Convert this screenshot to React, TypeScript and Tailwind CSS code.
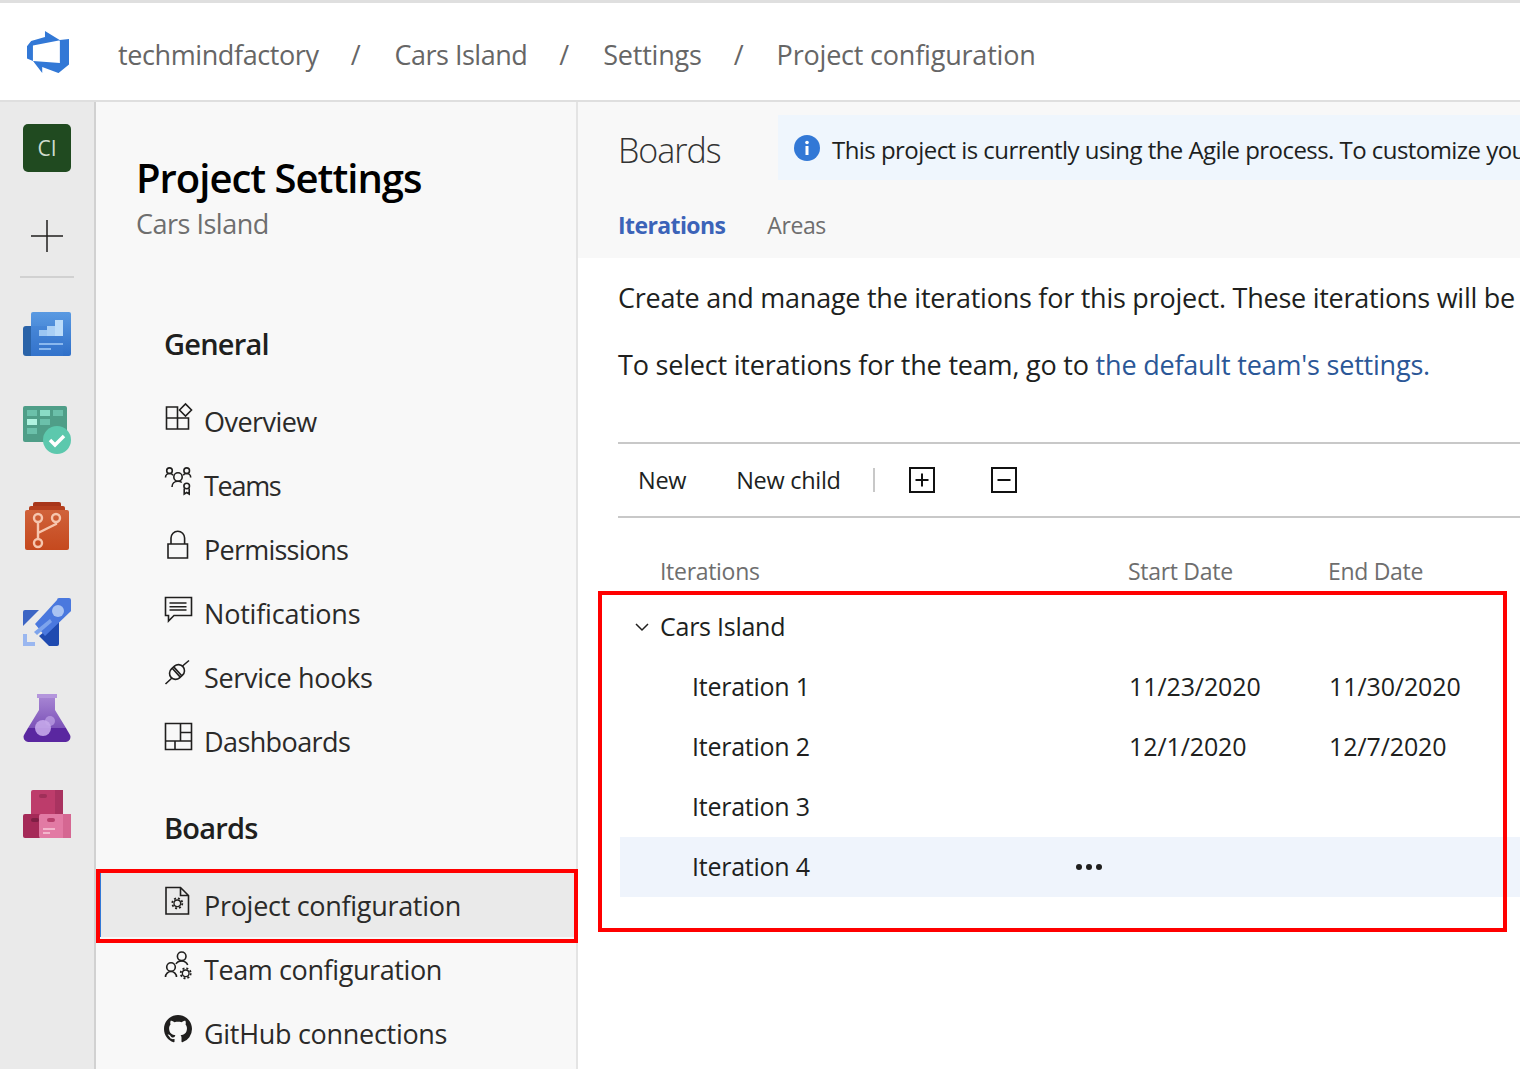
import React from 'react';

const Logo = () => (
  <svg width="42" height="42" viewBox="1 1 16 16">
    <path
      fill="#3278d6"
      d="M17 4v9.74l-4 3.28-6.2-2.26V17l-3.51-4.59 10.23.8V4.44L17 4zm-3.41.49L7.85 1v2.27L2.58 4.82 1 6.85v4.61l2.26 1V6.5l10.33-2.01z"
    />
  </svg>
);

const BoardsIcon = () => (
  <svg width="48" height="48" viewBox="0 0 48 48" className="-mb-0.5">
    <defs>
      <linearGradient id="bd" x1="0" y1="0" x2="0" y2="1">
        <stop offset="0" stopColor="#5a9ae2" />
        <stop offset="1" stopColor="#2f6fc8" />
      </linearGradient>
    </defs>
    <path d="M3 14h10v30H3a3 3 0 0 1-3-3V17a3 3 0 0 1 3-3z" fill="#2a63a8" />
    <path d="M10 0h36a2 2 0 0 1 2 2v40a2 2 0 0 1-2 2H8V2a2 2 0 0 1 2-2z" fill="url(#bd)" />
    <rect x="8" y="14" width="32" height="30" fill="#3d7bd0" opacity="0.35" />
    <rect x="16" y="18" width="8" height="6" fill="#9cc6f2" />
    <rect x="24" y="14" width="8" height="10" fill="#a9cff5" />
    <rect x="32" y="8" width="8" height="16" fill="#bcdcf9" />
    <rect x="16" y="31" width="24" height="2" fill="#8ab8ee" />
    <rect x="16" y="36" width="12" height="2" fill="#8ab8ee" />
  </svg>
);

const TestPlanIcon = () => (
  <svg width="48" height="48" viewBox="0 0 48 48">
    <rect x="0" y="0" width="44" height="36" rx="2" fill="#4f9e88" />
    <rect x="4" y="4" width="10" height="6" fill="#6bc0aa" />
    <rect x="17" y="4" width="10" height="6" fill="#8adcc6" />
    <rect x="30" y="4" width="10" height="6" fill="#6bc0aa" />
    <rect x="4" y="13" width="10" height="6" fill="#b0f3e0" />
    <rect x="17" y="13" width="10" height="6" fill="#6bc0aa" />
    <rect x="4" y="22" width="10" height="6" fill="#6bc0aa" />
    <circle cx="34" cy="34" r="14" fill="#5cc8ad" />
    <path d="M27 34l5 5 9-9" fill="none" stroke="#fff" strokeWidth="3.5" />
  </svg>
);

const ReposIcon = () => (
  <svg width="48" height="48" viewBox="0 0 48 48">
    <defs>
      <linearGradient id="rp" x1="0" y1="0" x2="0" y2="1">
        <stop offset="0" stopColor="#d0623a" />
        <stop offset="1" stopColor="#c5491e" />
      </linearGradient>
    </defs>
    <rect x="10" y="0" width="28" height="8" rx="2" fill="#a8361a" />
    <rect x="6" y="4" width="36" height="10" rx="2" fill="#b53f1e" />
    <rect x="2" y="8" width="44" height="40" rx="2" fill="url(#rp)" />
    <g fill="none" stroke="#f6c6ae" strokeWidth="2.4">
      <circle cx="15" cy="16" r="4" />
      <circle cx="33" cy="16" r="4" />
      <circle cx="15" cy="41" r="4" />
      <path d="M15 20v17M33 20v2l-18 9" />
    </g>
  </svg>
);

const PipelinesIcon = () => (
  <svg width="48" height="48" viewBox="0 0 48 48">
    <path d="M0 14a2 2 0 0 1 2-2h14L0 28z" fill="#3c65c4" />
    <path d="M36 22v24a2 2 0 0 1-2 2h-8l-10-10z" fill="#1f4ab0" />
    <path d="M12 26L34 2a2 2 0 0 1 2-2h10a2 2 0 0 1 2 2v10a2 2 0 0 1-1 2L22 38z" fill="#4a78de" />
    <circle cx="35" cy="13" r="6" fill="#a9c3f2" />
    <path d="M11 34L27 21l2 3-15 13z" fill="#7ea4ec" />
    <path d="M0 36h4v8h8v4H0z" fill="#9ab7f0" />
  </svg>
);

const TestIcon = () => (
  <svg width="48" height="48" viewBox="0 0 48 48">
    <defs>
      <linearGradient id="ts" x1="0" y1="0" x2="0" y2="1">
        <stop offset="0" stopColor="#a583d2" />
        <stop offset="1" stopColor="#7c52b8" />
      </linearGradient>
    </defs>
    <rect x="14" y="0" width="20" height="4" fill="#b496dc" />
    <path d="M16 4h16v12l11 18H5l11-18z" fill="url(#ts)" />
    <path d="M5 34h38l4 7a5 5 0 0 1-4 7H5a5 5 0 0 1-4-7z" fill="#5a27a0" />
    <circle cx="20" cy="34" r="8" fill="#c5a9ea" opacity="0.9" />
    <circle cx="27" cy="27" r="5" fill="#c5a9ea" opacity="0.65" />
  </svg>
);

const ArtifactsIcon = () => (
  <svg width="48" height="48" viewBox="0 0 48 48">
    <rect x="8" y="0" width="32" height="26" rx="2" fill="#bd3c6b" />
    <rect x="32" y="0" width="8" height="26" fill="#a93360" />
    <rect x="16" y="4" width="8" height="4" rx="2" fill="#a02f59" />
    <rect x="0" y="24" width="18" height="24" rx="2" fill="#a52a58" />
    <rect x="16" y="24" width="32" height="24" rx="2" fill="#e27aa4" />
    <rect x="40" y="24" width="8" height="24" fill="#d56792" />
    <rect x="8" y="28" width="8" height="4" rx="2" fill="#7e1f44" />
    <rect x="24" y="28" width="8" height="4" rx="2" fill="#b83f6c" />
    <rect x="20" y="38" width="12" height="2" fill="#f3b5cc" />
    <rect x="20" y="42" width="7" height="2" fill="#f3b5cc" />
  </svg>
);

const stroke = { fill: 'none', stroke: '#201f1e', strokeWidth: 1.6 };

const navIcons: Record<string, React.ReactNode> = {
  overview: (
    <g {...stroke}>
      <path d="M12.500 16V5H1.500v22h22V16H1.500M12.500 16v11" />
      <path d="M14.500 8l6-6 6 6-6 6z" />
    </g>
  ),
  teams: (
    <g {...stroke}>
      <circle cx="4.500" cy="4.700" r="2.800" />
      <circle cx="21.700" cy="4.700" r="2.800" />
      <circle cx="13" cy="11" r="4.200" />
      <path d="M.5 11.500c0-2.500 2-4 4-4 1.500 0 2.800.6 3.500 1.700M25.700 11.500c0-2.500-2-4-4-4-1.500 0-2.800.6-3.500 1.700M7 21c0-3.500 2.500-5.700 6-5.700 1.500 0 2.800.4 3.800 1.200" />
      <circle cx="21.700" cy="20" r="2.800" />
      <path d="M19.200 22.500v5.500l2.500-1.500 2.500 1.500v-5.500" />
    </g>
  ),
  lock: (
    <g {...stroke}>
      <path d="M3 14h19.500v14H3zM6 14V8a6.800 6.800 0 0 1 13.600 0v6" />
    </g>
  ),
  notify: (
    <g {...stroke}>
      <path d="M.5 3.500h26v18H9l-5.500 5.500v-5.500H.5z" />
      <path d="M4.500 9h17M4.500 12.700h17M4.500 16h17" />
    </g>
  ),
  hook: (
    <g {...stroke}>
      <path d="M.5 26l6.500-6M17.500 8l6.500-5.500" />
      <g transform="rotate(-42 12 14)">
        <rect x="4" y="8" width="16" height="12" rx="6" />
        <path d="M11 8v12M13 8v12" />
      </g>
    </g>
  ),
  dash: (
    <g {...stroke}>
      <path d="M.5 1.500h26v26H.5zM.5 19h26M15.500 1.500V19M15.500 10.500h11M10 19v8.500" />
    </g>
  ),
  project: (
    <g {...stroke}>
      <path d="M1 1.500h14.500l8 8v18.500H1zM15.500 1.500v8h8" />
      <circle cx="12.300" cy="17.300" r="3.300" strokeWidth="1.300" />
      <circle cx="12.300" cy="17.300" r="5" strokeDasharray="2 1.930" strokeWidth="1.800" />
    </g>
  ),
  team: (
    <g {...stroke}>
      <circle cx="16.700" cy="6.300" r="4.300" />
      <circle cx="6" cy="17" r="4.300" />
      <path d="M.5 27c0-3 2.500-5.500 5.500-5.500s5.500 2.500 5.500 5.500M11 14c1-2 3-3 5.700-3s5 1.500 6 4" />
      <circle cx="20.700" cy="23.300" r="3.300" strokeWidth="1.300" />
      <circle cx="20.700" cy="23.300" r="5" strokeDasharray="2 1.930" strokeWidth="1.800" />
    </g>
  ),
};

const NavSvg = ({ name }: { name: string }) => (
  <svg width="30" height="30" viewBox="-2 0 30 30" className="shrink-0">
    {navIcons[name]}
  </svg>
);

const GithubIcon = () => (
  <svg width="28" height="28" viewBox="0 0 16 16" className="shrink-0" fill="#201f1e">
    <path d="M8 0C3.580 0 0 3.580 0 8c0 3.540 2.290 6.530 5.470 7.590.4.070.55-.17.55-.38 0-.19-.01-.82-.01-1.490-2.010.37-2.530-.49-2.690-.94-.09-.23-.48-.94-.82-1.130-.28-.15-.68-.52-.01-.53.63-.01 1.080.58 1.230.82.720 1.210 1.870.87 2.330.66.070-.52.280-.87.510-1.070-1.780-.2-3.640-.89-3.640-3.950 0-.87.310-1.590.820-2.150-.08-.2-.36-1.020.08-2.120 0 0 .67-.21 2.200.82.640-.18 1.320-.27 2-.27s1.360.09 2 .27c1.530-1.040 2.200-.82 2.200-.82.440 1.100.160 1.920.080 2.120.510.560.820 1.270.820 2.150 0 3.070-1.870 3.750-3.650 3.950.29.250.54.730.54 1.480 0 1.070-.01 1.930-.01 2.200 0 .21.150.46.550.38A8.010 8.010 0 0 0 16 8c0-4.420-3.580-8-8-8z" />
  </svg>
);

const NavItem = ({
  icon,
  label,
  active,
  tracking = 'tracking-[-0.3px]',
}: {
  icon: React.ReactNode;
  label: string;
  active?: boolean;
  tracking?: string;
}) => (
  <div className={`h-16 flex items-center gap-[11px] ${active ? 'bg-[#eaeaea] border-l-[5px] border-[#3278d6] pl-[62px]' : 'pl-[67px]'}`}>
    <div className="w-[30px] -mt-2 flex justify-center">{icon}</div>
    <span className={`text-[27px] leading-none text-[#2b2a29] ${tracking}`}>{label}</span>
  </div>
);

const rows = [
  { name: 'Iteration 1', start: '11/23/2020', end: '11/30/2020' },
  { name: 'Iteration 2', start: '12/1/2020', end: '12/7/2020' },
  { name: 'Iteration 3', start: '', end: '' },
];

export default function App() {
  return (
    <div className="relative h-screen overflow-hidden bg-white flex flex-col text-[#201f1e] font-['Open_Sans','Noto_Sans',sans-serif]">
      {/* top bar */}
      <header className="h-[102px] shrink-0 border-t-[3px] border-b-2 border-[#dfdfdf] flex items-center text-[27px] text-[#666666]">
        <div className="w-[118px] pl-[27px] flex">
          <Logo />
        </div>
        <span className="mt-2 tracking-[-0.4px]">techmindfactory</span>
        <span className="mt-2 ml-[32px]">/</span>
        <span className="mt-2 ml-[34px] tracking-[-0.5px]">Cars Island</span>
        <span className="mt-2 ml-[32px]">/</span>
        <span className="mt-2 ml-[34px] tracking-[-0.2px]">Settings</span>
        <span className="mt-2 ml-[32px]">/</span>
        <span className="mt-2 ml-[33px] tracking-[-0.2px]">Project configuration</span>
      </header>

      <div className="flex-1 flex min-h-0">
        {/* icon rail */}
        <aside className="w-[96px] shrink-0 bg-[#eaeaea] border-r-2 border-[#d1d1d1] flex flex-col items-center">
          <div className="mt-[22px] w-12 h-12 pt-px rounded-[5px] bg-[#204a20] text-[#cfdccf] text-[21px] flex items-center justify-center">
            CI
          </div>
          <svg width="32" height="32" viewBox="0 0 32 32" className="mt-[48px]">
            <path d="M0 16h32M16 0v32" stroke="#201f1e" strokeWidth="1.500" />
          </svg>
          <div className="mt-[24px] w-[54px] h-0.5 bg-[#d1d1d1]" />
          <div className="mt-[34px] flex flex-col gap-12">
            <BoardsIcon />
            <TestPlanIcon />
            <ReposIcon />
            <PipelinesIcon />
            <TestIcon />
            <ArtifactsIcon />
          </div>
        </aside>

        {/* settings nav */}
        <aside className="w-[482px] shrink-0 bg-[#f8f8f8] border-r-2 border-[#e4e4e4] flex flex-col">
          <div className="pl-[40px] pt-[50px]">
            <h1 className="text-[40px] leading-[52px] font-semibold text-black tracking-[-1px]">Project Settings</h1>
            <p className="text-[27px] leading-[36px] text-[#6e6e6e] mt-[2px] tracking-[-0.5px]">Cars Island</p>
          </div>
          <h2 className="pl-[68px] mt-[82px] text-[29px] leading-[40px] font-semibold tracking-[-0.8px]">General</h2>
          <div className="mt-[25px] flex flex-col">
            <NavItem icon={<NavSvg name="overview" />} label="Overview" tracking="tracking-[-0.55px]" />
            <NavItem icon={<NavSvg name="teams" />} label="Teams" tracking="tracking-[-1.3px]" />
            <NavItem icon={<NavSvg name="lock" />} label="Permissions" tracking="tracking-[-0.75px]" />
            <NavItem icon={<NavSvg name="notify" />} label="Notifications" tracking="tracking-[-0.2px]" />
            <NavItem icon={<NavSvg name="hook" />} label="Service hooks" />
            <NavItem icon={<NavSvg name="dash" />} label="Dashboards" tracking="tracking-[-0.6px]" />
          </div>
          <h2 className="pl-[68px] mt-[35px] text-[29px] leading-[40px] font-semibold tracking-[-0.8px]">Boards</h2>
          <div className="mt-[25px] flex flex-col">
            <NavItem icon={<NavSvg name="project" />} label="Project configuration" active />
            <NavItem icon={<NavSvg name="team" />} label="Team configuration" tracking="tracking-[-0.4px]" />
            <NavItem icon={<GithubIcon />} label="GitHub connections" />
          </div>
        </aside>

        {/* main */}
        <main className="flex-1 min-w-0 flex flex-col overflow-hidden">
          <div className="h-[156px] shrink-0 bg-[#f8f8f8] pl-[40px] flex flex-col">
            <div className="flex pt-[13px] h-[78px]">
              <div className="w-[160px] text-[34px] font-light leading-[70px] text-[#333333] tracking-[-1px]">Boards</div>
              <div className="flex-1 min-w-0 bg-[#eff6fd] flex items-center pl-4 gap-3 overflow-hidden whitespace-nowrap">
                <svg width="26" height="26" viewBox="0 0 26 26" className="shrink-0">
                  <circle cx="13" cy="13" r="13" fill="#3278d6" />
                  <rect x="11.500" y="11" width="3" height="9" fill="#fff" />
                  <circle cx="13" cy="7.500" r="1.800" fill="#fff" />
                </svg>
                <span className="mt-1 text-[24px] tracking-[-0.55px]">
                  This project is currently using the Agile process. To customize your work items
                </span>
              </div>
            </div>
            <div className="flex items-center gap-[42px] mt-[34px] text-[23px] leading-none">
              <span className="font-bold text-[#3c63b8] tracking-[-0.6px]">Iterations</span>
              <span className="text-[#6e6e6e] tracking-[-0.4px]">Areas</span>
            </div>
          </div>

          <div className="flex-1 pl-[40px] min-w-0">
            <p className="mt-[20px] text-[27px] leading-[40px] whitespace-nowrap tracking-[-0.25px]">
              Create and manage the iterations for this project. These iterations will be
            </p>
            <p className="mt-[27px] text-[27px] leading-[40px] whitespace-nowrap tracking-[-0.2px]">
              To select iterations for the team, go to{' '}
              <span className="text-[#2b5797]">the default team's settings.</span>
            </p>

            <div className="mt-[57px] h-[76px] border-y-2 border-[#c8c8c8] flex items-center text-[23.5px] tracking-[-0.3px]">
              <span className="ml-[20px] mt-0.5">New</span>
              <span className="ml-[50px] mt-0.5">New child</span>
              <div className="ml-[32px] w-0.5 h-6 bg-[#c8c8c8]" />
              <svg width="26" height="26" viewBox="0 0 26 26" className="ml-[34px]">
                <path d="M1 1h24v24H1zM6.500 13h13M13 6.500v13" fill="none" stroke="#111" strokeWidth="2" />
              </svg>
              <svg width="26" height="26" viewBox="0 0 26 26" className="ml-[56px]">
                <path d="M1 1h24v24H1zM6.500 13h13" fill="none" stroke="#111" strokeWidth="2" />
              </svg>
            </div>

            {/* iterations table */}
            <div className="mt-[28px] h-[51px] flex items-center text-[23px] text-[#6e6e6e] tracking-[-0.3px]">
              <span className="ml-[42px] w-[468px]">Iterations</span>
              <span className="w-[200px]">Start Date</span>
              <span>End Date</span>
            </div>
            <div className="h-[60px] flex items-center text-[25px] tracking-[-0.25px]">
              <svg width="16" height="16" viewBox="0 0 16 16" className="ml-[16px]">
                <path d="M2 5l6 6 6-6" fill="none" stroke="#201f1e" strokeWidth="1.500" />
              </svg>
              <span className="ml-[10px]">Cars Island</span>
            </div>
            {rows.map(r => (
              <div key={r.name} className="h-[60px] flex items-center text-[25px] tracking-[-0.25px]">
                <span className="ml-[74px] w-[437px]">{r.name}</span>
                <span className="w-[200px] tracking-[-0.1px]">{r.start}</span>
                <span className="tracking-[-0.1px]">{r.end}</span>
              </div>
            ))}
            <div className="ml-[2px] h-[60px] flex items-center bg-[#eff4fc] text-[25px] tracking-[-0.25px]">
              <span className="ml-[72px] w-[384px]">Iteration 4</span>
              <span className="flex gap-[4px]">
                <span className="w-[6px] h-[6px] rounded-full bg-[#201f1e]" />
                <span className="w-[6px] h-[6px] rounded-full bg-[#201f1e]" />
                <span className="w-[6px] h-[6px] rounded-full bg-[#201f1e]" />
              </span>
            </div>
          </div>
        </main>
      </div>

      {/* red annotation boxes */}
      <div className="absolute left-[96px] top-[869px] w-[482px] h-[74px] border-4 border-[#ff0000]" />
      <div className="absolute left-[598px] top-[591px] w-[909px] h-[341px] border-4 border-[#ff0000]" />
    </div>
  );
}
